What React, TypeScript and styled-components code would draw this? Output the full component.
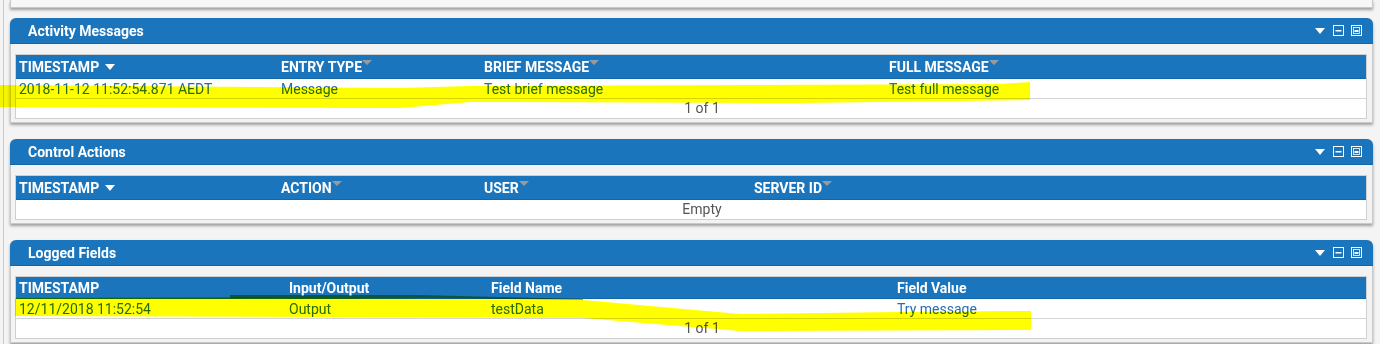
import React from 'react'
import styled, { createGlobalStyle } from 'styled-components'

const GlobalStyle = createGlobalStyle`
    html, body {
        margin: 0;
        padding: 0;
        background: #f4f4f4;
        font-family: Roboto, "Liberation Sans", Arial, sans-serif;
        font-size: 14px;
    }
    * {
        box-sizing: border-box;
    }
`

interface Column {
    label: string
    width: number
    sort?: 'active' | 'idle'
}

interface TableProps {
    columns: Column[]
    rows: string[][]
    footer: string
    headHeight: number
}

const activityColumns: Column[] = [
    { label: 'TIMESTAMP', width: 262, sort: 'active' },
    { label: 'ENTRY TYPE', width: 203, sort: 'idle' },
    { label: 'BRIEF MESSAGE', width: 405, sort: 'idle' },
    { label: 'FULL MESSAGE', width: 0, sort: 'idle' },
]

const controlColumns: Column[] = [
    { label: 'TIMESTAMP', width: 262, sort: 'active' },
    { label: 'ACTION', width: 203, sort: 'idle' },
    { label: 'USER', width: 270, sort: 'idle' },
    { label: 'SERVER ID', width: 0, sort: 'idle' },
]

const loggedColumns: Column[] = [
    { label: 'TIMESTAMP', width: 270 },
    { label: 'Input/Output', width: 202 },
    { label: 'Field Name', width: 406 },
    { label: 'Field Value', width: 0 },
]

function gridOf(columns: Column[]) {
    return columns.map(c => (c.width ? `${c.width}px` : '1fr')).join(' ')
}

function HeaderTools() {
    return (
        <Tools>
            <svg width="48" height="12" viewBox="0 0 48 12">
                <polygon points="0,3 10,3 5,9" fill="#fff" />
                <rect x="18.5" y="0.5" width="10" height="10" fill="none" stroke="#fff" />
                <rect x="20.5" y="5" width="6" height="1.5" fill="#fff" />
                <rect x="36.5" y="0.5" width="10" height="10" fill="none" stroke="#fff" />
                <rect x="38.5" y="2.5" width="6" height="6" fill="none" stroke="#fff" strokeWidth="0.8" />
                <rect x="39.5" y="5" width="4" height="2" fill="#fff" />
            </svg>
        </Tools>
    )
}

function DataTable({ columns, rows, footer, headHeight }: TableProps) {
    const grid = gridOf(columns)
    return (
        <TableBox>
            <HeadRow $grid={grid} $height={headHeight}>
                {columns.map(c => (
                    <HeadCell key={c.label}>
                        {c.label}
                        {c.sort === 'active' && <ActiveSort />}
                        {c.sort === 'idle' && <IdleSort />}
                    </HeadCell>
                ))}
            </HeadRow>
            {rows.map((r, i) => (
                <DataRow key={i} $grid={grid}>
                    {r.map((v, j) => <DataCell key={j}>{v}</DataCell>)}
                </DataRow>
            ))}
            <FooterRow>{footer}</FooterRow>
        </TableBox>
    )
}

function Panel({ title, children }: { title: string, children: React.ReactNode }) {
    return (
        <PanelBox>
            <PanelHeader>
                <PanelTitle>{title}</PanelTitle>
                <HeaderTools />
            </PanelHeader>
            <PanelBody>{children}</PanelBody>
        </PanelBox>
    )
}

export default function App() {
    return (
        <>
            <GlobalStyle />
            <Page>
                <Column>
                    <PrevPanel />
                    <Panel title="Activity Messages">
                        <DataTable
                            columns={activityColumns}
                            headHeight={24}
                            rows={[['2018-11-12 11:52:54.871 AEDT', 'Message', 'Test brief message', 'Test full message']]}
                            footer="1 of 1"
                        />
                    </Panel>
                    <Panel title="Control Actions">
                        <DataTable columns={controlColumns} headHeight={24} rows={[]} footer="Empty" />
                    </Panel>
                    <Panel title="Logged Fields">
                        <DataTable
                            columns={loggedColumns}
                            headHeight={22}
                            rows={[['12/11/2018 11:52:54', 'Output', 'testData', 'Try message']]}
                            footer="1 of 1"
                        />
                    </Panel>
                </Column>
                <Highlights width="1380" height="344" viewBox="0 0 1380 344">
                    <polygon
                        points="0,85 400,88 470,86 1000,84 1030,82 1030,100 800,103 470,102 400,108 0,107"
                        fill="#ffff00"
                    />
                    <polygon
                        points="15,298 230,297 583,300 740,314 900,312 1031,311 1031,330 740,331 583,318 15,316"
                        fill="#ffff00"
                    />
                    <polygon points="230,295 420,295 583,299 583,300 420,298 230,298" fill="#3f9a10" opacity="0.7" />
                </Highlights>
            </Page>
        </>
    )
}

const Page = styled.div`
    position: relative;
    width: 1380px;
    height: 344px;
    overflow: hidden;
`

const Column = styled.div`
    display: flex;
    flex-direction: column;
    gap: 16px;
    margin-left: 3px;
    padding: 0 7px 0 6px;
    border-left: 1px solid #c9c9c9;
    min-height: 344px;

    & > * {
        flex-shrink: 0;
    }
`

const PrevPanel = styled.div`
    height: 8px;
    margin-bottom: -6px;
    background: #f7f7f7;
    border: 1px solid #c9c9c9;
    border-top: none;
    box-shadow: 0 2px 3px rgba(0, 0, 0, 0.35);
`

const PanelBox = styled.div`
    display: flex;
    flex-direction: column;
    background: #f3f3f3;
    border: 1px solid #c9c9c9;
    border-top: none;
    border-radius: 6px 6px 0 0;
    box-shadow: 0 2px 3px rgba(0, 0, 0, 0.35);
`

const PanelHeader = styled.div`
    display: flex;
    align-items: center;
    justify-content: space-between;
    height: 26px;
    padding: 0 10px 0 18px;
    margin: 0 -1px;
    background: #1b75bc;
    border-bottom: 1px solid #1366a8;
    border-radius: 6px 6px 0 0;
`

const PanelTitle = styled.span`
    color: #fff;
    font-weight: 700;
    font-size: 14px;
`

const Tools = styled.div`
    display: flex;
    align-items: center;
`

const PanelBody = styled.div`
    padding: 10px 5px 3px 4px;
`

const TableBox = styled.div`
    background: #fff;
    border: 1px solid #cfcfcf;
`

const HeadRow = styled.div<{ $grid: string, $height: number }>`
    display: grid;
    grid-template-columns: ${p => p.$grid};
    height: ${p => p.$height}px;
    align-items: center;
    background: #1b75bc;
    border-bottom: 1px solid #1366a8;
`

const HeadCell = styled.div`
    display: flex;
    align-items: center;
    padding-left: 3px;
    color: #fff;
    font-weight: 700;
    font-size: 14px;
`

const ActiveSort = styled.span`
    width: 0;
    height: 0;
    margin-left: 6px;
    border-left: 5px solid transparent;
    border-right: 5px solid transparent;
    border-top: 6px solid #fff;
`

const IdleSort = styled.span`
    align-self: flex-start;
    width: 0;
    height: 0;
    margin-top: 1px;
    border-left: 5px solid transparent;
    border-right: 5px solid transparent;
    border-top: 5px solid #9a9a9a;
`

const DataRow = styled.div<{ $grid: string }>`
    display: grid;
    grid-template-columns: ${p => p.$grid};
    height: 20px;
    align-items: center;
    border-bottom: 1px solid #d4d4d4;
`

const DataCell = styled.div`
    padding-left: 3px;
    color: #2a6cb0;
    font-size: 14px;
    white-space: nowrap;
`

const FooterRow = styled.div`
    height: 19px;
    line-height: 19px;
    padding-left: 22px;
    text-align: center;
    color: #555;
    font-size: 14px;
`

const Highlights = styled.svg`
    position: absolute;
    left: 0;
    top: 0;
    pointer-events: none;
    mix-blend-mode: multiply;
`
